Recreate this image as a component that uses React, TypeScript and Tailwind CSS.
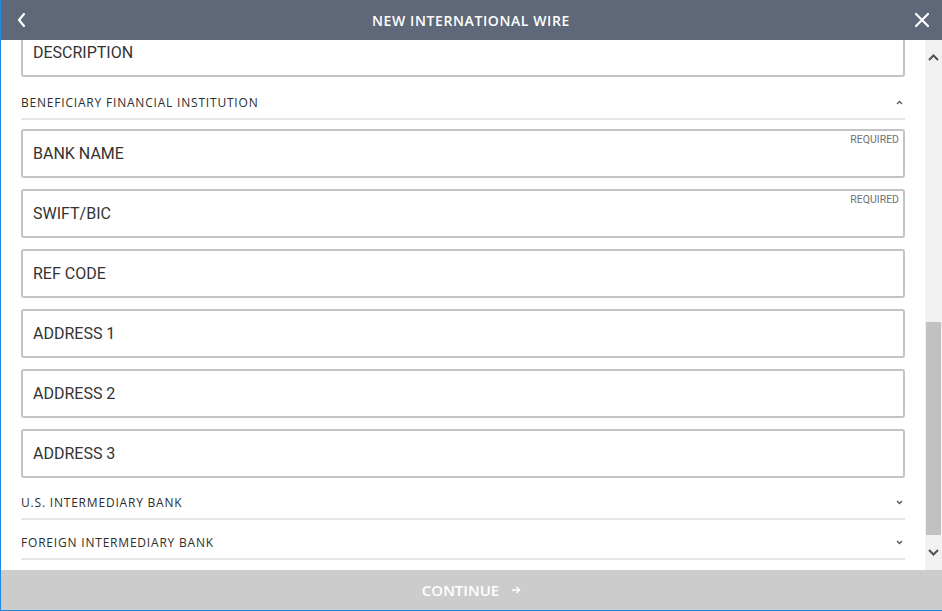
import React from "react";

const fields = [
  { label: "BANK NAME", required: true },
  { label: "SWIFT/BIC", required: true },
  { label: "REF CODE" },
  { label: "ADDRESS 1" },
  { label: "ADDRESS 2" },
  { label: "ADDRESS 3" },
];

const Field = ({ label, required }: { label: string; required?: boolean }) => (
  <div className="relative h-[49px] border-2 border-[#c4c4c4] rounded-[3px] bg-white flex items-center px-[10px]">
    <span className="text-[16px] text-[#333] font-['Roboto',sans-serif]">{label}</span>
    {required && (
      <span className="absolute right-[4px] top-[1px] text-[10.5px] text-[#717171] font-['Roboto',sans-serif]">
        REQUIRED
      </span>
    )}
  </div>
);

const Caret = ({ up }: { up?: boolean }) => (
  <svg width="7" height="5" viewBox="0 0 7 5" className="mr-[2px]">
    <polyline
      points={up ? "1,4 3.5,1.5 6,4" : "1,1 3.5,3.5 6,1"}
      fill="none"
      stroke="#555"
      strokeWidth="1.3"
    />
  </svg>
);

const SectionHeader = ({ title, open, className }: { title: string; open?: boolean; className: string }) => (
  <div className={`h-[33px] border-b-2 border-[#e6e6e6] flex items-center justify-between ${className}`}>
    <span className="text-[12px] font-medium text-[#2d2d2d] tracking-[0.8px] font-['Open_Sans',sans-serif]">{title}</span>
    <Caret up={open} />
  </div>
);

export default function App() {
  return (
    <div className="w-[942px] h-[611px] flex flex-col bg-white border-l border-b border-[#2188e0] overflow-hidden">
      {/* header */}
      <div className="h-[40px] bg-[#5e6879] flex items-center justify-between px-[15px] shrink-0">
        <svg width="12" height="16" viewBox="0 0 12 16">
          <polyline points="8,2 3,8 8,14" fill="none" stroke="#fff" strokeWidth="2.2" strokeLinecap="round" strokeLinejoin="round" />
        </svg>
        <span className="text-white text-[14px] font-semibold tracking-[0.6px] font-['Open_Sans',sans-serif]">NEW INTERNATIONAL WIRE</span>
        <svg width="16" height="16" viewBox="0 0 16 16" className="-mr-[3px]">
          <path d="M2 2 L14 14 M14 2 L2 14" stroke="#fff" strokeWidth="2.2" strokeLinecap="round" />
        </svg>
      </div>

      {/* body */}
      <div className="flex flex-1 min-h-0">
        <div className="flex-1 overflow-hidden px-[20px]">
          <div className="-mt-[12px]">
            <Field label="DESCRIPTION" />
            <SectionHeader title="BENEFICIARY FINANCIAL INSTITUTION" open className="mt-[10px]" />
            <div className="mt-[9px] flex flex-col gap-[11px]">
              {fields.map((f) => (
                <Field key={f.label} label={f.label} required={f.required} />
              ))}
            </div>
            <SectionHeader title="U.S. INTERMEDIARY BANK" className="mt-[9px]" />
            <SectionHeader title="FOREIGN INTERMEDIARY BANK" className="mt-[7px]" />
          </div>
        </div>

        {/* scrollbar */}
        <div className="w-[17px] bg-[#f1f1f1] flex flex-col">
          <div className="h-[35px] flex items-center justify-center">
            <svg width="11" height="7" viewBox="0 0 11 7">
              <polyline points="1,6 5.5,1.5 10,6" fill="none" stroke="#505050" strokeWidth="2" />
            </svg>
          </div>
          <div className="flex-1 flex flex-col">
            <div className="h-[247px]" />
            <div className="h-[213px] mx-[1px] bg-[#c1c1c1]" />
          </div>
          <div className="h-[35px] flex items-center justify-center">
            <svg width="11" height="7" viewBox="0 0 11 7">
              <polyline points="1,1 5.5,5.5 10,1" fill="none" stroke="#505050" strokeWidth="2" />
            </svg>
          </div>
        </div>
      </div>

      {/* footer */}
      <div className="h-[40px] bg-[#cccccc] flex items-center justify-center gap-[12px] shrink-0">
        <span className="text-white text-[15px] font-semibold font-['Open_Sans',sans-serif]">CONTINUE</span>
        <svg width="10" height="10" viewBox="0 0 10 10">
          <path d="M1 5 H8.5 M5.5 2 L8.5 5 L5.5 8" fill="none" stroke="#fff" strokeWidth="1.4" />
        </svg>
      </div>
    </div>
  );
}
